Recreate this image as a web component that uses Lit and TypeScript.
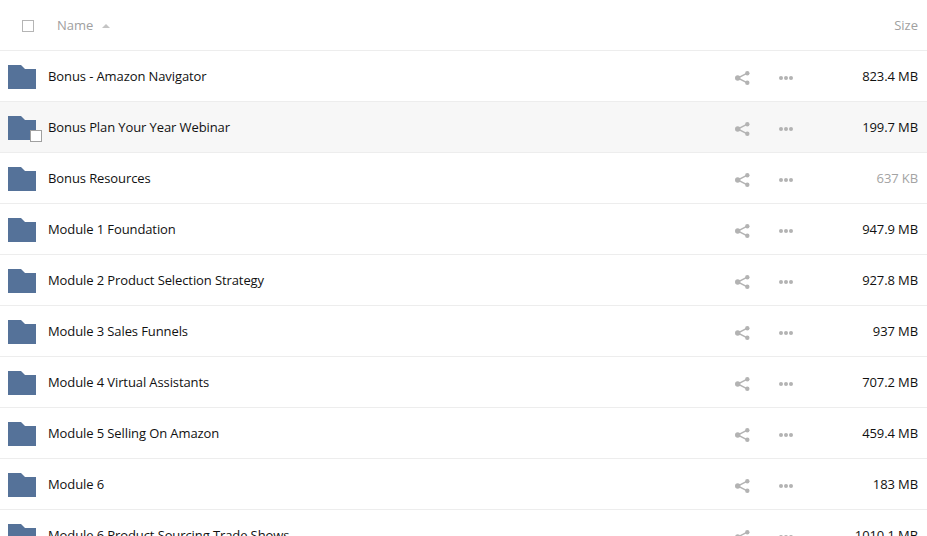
import { LitElement, html, css, svg } from "lit";
import { customElement } from "lit/decorators.js";

const rows: { name: string; size: string; light?: boolean; hover?: boolean }[] = [
  { name: "Bonus - Amazon Navigator", size: "823.4 MB" },
  { name: "Bonus Plan Your Year Webinar", size: "199.7 MB", hover: true },
  { name: "Bonus Resources", size: "637 KB", light: true },
  { name: "Module 1 Foundation", size: "947.9 MB" },
  { name: "Module 2 Product Selection Strategy", size: "927.8 MB" },
  { name: "Module 3 Sales Funnels", size: "937 MB" },
  { name: "Module 4 Virtual Assistants", size: "707.2 MB" },
  { name: "Module 5 Selling On Amazon", size: "459.4 MB" },
  { name: "Module 6", size: "183 MB" },
  { name: "Module 6 Product Sourcing Trade Shows", size: "1010.1 MB" },
];

const folder = svg`<svg class="folder" width="28" height="24" viewBox="0 0 28 24"><path fill="#557299" d="M0 0H13L17 4H28V24H0Z"/></svg>`;
const share = svg`<svg class="share" width="15" height="14" viewBox="0 0 15 14"><g fill="#b3b3b3"><circle cx="12.3" cy="2.2" r="2.2"/><circle cx="2.7" cy="7" r="2.7"/><circle cx="12.3" cy="11.8" r="2.2"/></g><path d="M12.3 2.2L2.7 7L12.3 11.8" fill="none" stroke="#b3b3b3" stroke-width="1.4"/></svg>`;
const dots = svg`<svg class="dots" width="14" height="4" viewBox="0 0 14 4"><g fill="#b3b3b3"><circle cx="2" cy="2" r="2"/><circle cx="7" cy="2" r="2"/><circle cx="12" cy="2" r="2"/></g></svg>`;

@customElement("app-root")
export class AppRoot extends LitElement {
  static styles = css`
    :host {
      display: block;
      height: 536px;
      overflow: hidden;
      background: #fff;
      font-family: "Open Sans", sans-serif;
      font-size: 13px;
      color: #111;
    }
    .head {
      display: flex;
      align-items: center;
      height: 50px;
      border-bottom: 1px solid #ededed;
      color: #a0a0a0;
    }
    .check {
      width: 12px;
      height: 12px;
      box-sizing: border-box;
      border: 1px solid #b5b5b5;
      margin: 1px 23px 0 22px;
      flex: none;
    }
    .name-head {
      display: flex;
      align-items: center;
      gap: 9px;
      flex: 1;
    }
    .caret {
      width: 0;
      height: 0;
      border-left: 4px solid transparent;
      border-right: 4px solid transparent;
      border-bottom: 4px solid #c4c4c4;
      margin-top: 1px;
    }
    .size-head {
      padding-right: 9px;
    }
    .row {
      display: flex;
      align-items: center;
      height: 50px;
      border-bottom: 1px solid #ededed;
      position: relative;
    }
    .row.hover {
      background: #f7f7f7;
    }
    .folder {
      margin: 1px 12px 0 8px;
      flex: none;
    }
    .hover-check {
      position: absolute;
      left: 30px;
      top: 28px;
      width: 12px;
      height: 12px;
      box-sizing: border-box;
      background: #fff;
      border: 1px solid #a0a0a0;
    }
    .name {
      flex: 1;
      white-space: nowrap;
      margin-top: -1px;
      letter-spacing: -0.1px;
    }
    .actions {
      display: flex;
      align-items: center;
      flex: none;
      margin-top: 4px;
    }
    .share {
      margin-right: 29px;
      flex: none;
    }
    .dots {
      flex: none;
    }
    .size {
      width: 134px;
      flex: none;
      text-align: right;
      padding-right: 9px;
      margin-top: -1px;
      box-sizing: border-box;
      letter-spacing: -0.1px;
    }
    .size.light {
      color: #a3a3a3;
    }
  `;

  render() {
    return html`
      <div class="head">
        <span class="check"></span>
        <div class="name-head"><span>Name</span><span class="caret"></span></div>
        <span class="size-head">Size</span>
      </div>
      ${rows.map(
        (r) => html`
          <div class="row ${r.hover ? "hover" : ""}">
            ${folder}
            ${r.hover ? html`<span class="hover-check"></span>` : ""}
            <span class="name">${r.name}</span>
            <div class="actions">${share}${dots}</div>
            <span class="size ${r.light ? "light" : ""}">${r.size}</span>
          </div>
        `
      )}
    `;
  }
}
